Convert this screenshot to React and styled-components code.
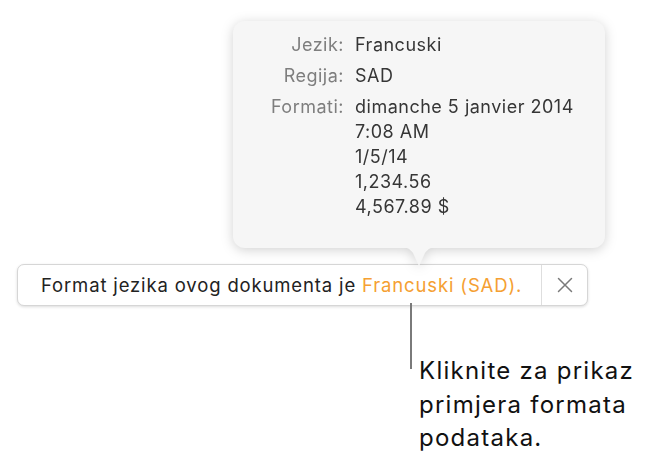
import React from "react";
import styled, { createGlobalStyle } from "styled-components";

const GlobalStyle = createGlobalStyle`
  html, body {
    margin: 0;
    padding: 0;
    background: #ffffff;
  }
  body {
    font-family: Inter, "Noto Sans", "Liberation Sans", sans-serif;
    -webkit-font-smoothing: antialiased;
  }
`;

const Page = styled.div`
  width: 657px;
  height: 465px;
  padding-top: 21px;
  box-sizing: border-box;
  overflow: hidden;
`;

const Popover = styled.div`
  position: relative;
  z-index: 2;
  margin-left: 233px;
  width: 372px;
  filter: drop-shadow(0 2px 6px rgba(0, 0, 0, 0.18));
`;

const PopoverBody = styled.div`
  background: #f6f6f6;
  border-radius: 12px;
  padding: 11px 10px 29px 30px;
  display: grid;
  grid-template-columns: 81px auto;
  column-gap: 11px;
  row-gap: 6px;
  font-size: 18px;
  line-height: 25px;
  letter-spacing: 0.5px;
`;

const Label = styled.div`
  text-align: right;
  color: #7e7e7e;
`;

const Value = styled.div`
  color: #363636;
`;

const Arrow = styled.svg`
  position: absolute;
  left: 168px;
  bottom: -19px;
  width: 36px;
  height: 20px;
  display: block;
`;

const Bar = styled.div`
  position: relative;
  z-index: 1;
  margin: 16px 0 0 17px;
  width: 571px;
  height: 42px;
  box-sizing: border-box;
  display: flex;
  align-items: stretch;
  background: #ffffff;
  border: 1px solid #d6d6d6;
  border-radius: 7px;
  box-shadow: 0 1px 3px rgba(0, 0, 0, 0.14);
`;

const Message = styled.div`
  flex: 1;
  display: flex;
  align-items: center;
  padding-left: 23px;
  font-size: 18.5px;
  letter-spacing: 0.85px;
  color: #222222;
  white-space: nowrap;
`;

const Link = styled.span`
  color: #f5a032;
  margin-left: 6px;
`;

const Close = styled.div`
  width: 45px;
  border-left: 1px solid #dedede;
  display: flex;
  align-items: center;
  justify-content: center;
`;

const Callout = styled.div`
  position: relative;
  z-index: 3;
  display: flex;
  align-items: flex-start;
  margin: -3px 0 0 410px;
`;

const Line = styled.div`
  width: 2px;
  height: 66px;
  background: #7a7a7a;
  flex: none;
`;

const CalloutText = styled.div`
  margin: 51px 0 0 7px;
  font-size: 24px;
  line-height: 33.5px;
  letter-spacing: 1.25px;
  color: #111111;
  white-space: nowrap;
`;

const rows = [
  ["Jezik:", ["Francuski"]],
  ["Regija:", ["SAD"]],
  [
    "Formati:",
    ["dimanche 5 janvier 2014", "7:08 AM", "1/5/14", "1,234.56", "4,567.89 $"],
  ],
];

export default function App() {
  return (
    <Page>
      <GlobalStyle />
      <Popover>
        <PopoverBody>
          {rows.map(([label, values]) => (
            <React.Fragment key={label}>
              <Label>{label}</Label>
              <Value>
                {values.map((v) => (
                  <div key={v}>{v}</div>
                ))}
              </Value>
            </React.Fragment>
          ))}
        </PopoverBody>
        <Arrow viewBox="0 0 36 20">
          <path
            d="M0 0 C6 0 9 2 12 6 L18 19 L24 6 C27 2 30 0 36 0 Z"
            fill="#f6f6f6"
          />
        </Arrow>
      </Popover>
      <Bar>
        <Message>
          Format jezika ovog dokumenta je<Link>Francuski (SAD).</Link>
        </Message>
        <Close>
          <svg width="16" height="16" viewBox="0 0 16 16">
            <path
              d="M1.5 1.5 L14.5 14.5 M14.5 1.5 L1.5 14.5"
              stroke="#7a7a7a"
              strokeWidth="1.5"
              strokeLinecap="round"
            />
          </svg>
        </Close>
      </Bar>
      <Callout>
        <Line />
        <CalloutText>
          Kliknite za prikaz
          <br />
          primjera formata
          <br />
          podataka.
        </CalloutText>
      </Callout>
    </Page>
  );
}
